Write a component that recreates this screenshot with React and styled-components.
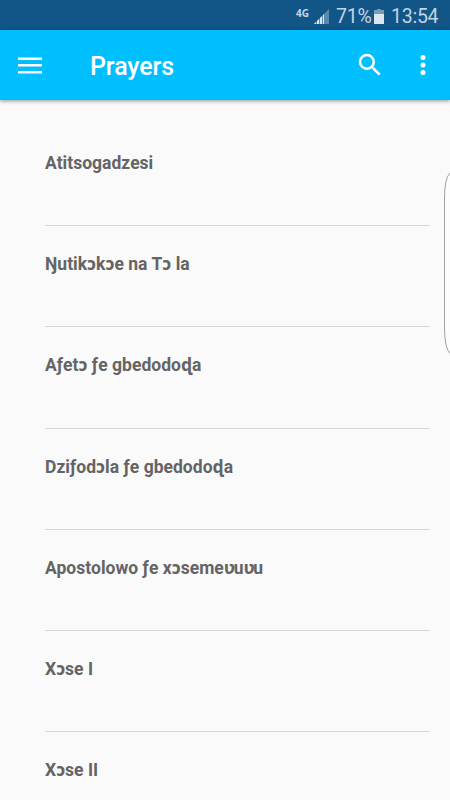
import React from "react";
import styled, { createGlobalStyle } from "styled-components";

const GlobalStyle = createGlobalStyle`
  *, *::before, *::after { box-sizing: border-box; }
  body { margin: 0; background: #fafafa; font-family: Roboto, "Noto Sans", sans-serif; overflow: hidden; }
`;

const Screen = styled.div`
  position: relative;
  display: flex;
  flex-direction: column;
  width: 450px;
  height: 800px;
  overflow: hidden;
  background: #fafafa;
`;

const StatusBar = styled.header`
  display: flex;
  flex: none;
  align-items: center;
  justify-content: flex-end;
  height: 30px;
  padding: 2px 12px 0 0;
  background: #125688;
  color: #c3d4e2;
  font-size: 19.5px;
  line-height: 28px;
`;

const Network = styled.span`
  margin: -7px 5px 0 0;
  font-size: 10px;
  font-weight: 700;
  letter-spacing: 0;
  font-family: "Open Sans", sans-serif;
`;

const SignalIcon = styled.svg`
  flex: none;
  margin-right: 7px;
`;

const BatteryIcon = styled.svg`
  flex: none;
  margin: 0 7px 0 4px;
`;

const StatusText = styled.span`
  width: ${(p) => p.$width}px;
  padding-top: 2px;
  white-space: nowrap;
  letter-spacing: -0.25px;
`;

const AppBar = styled.nav`
  display: flex;
  flex: none;
  align-items: center;
  height: 70px;
  padding: 0 10px 0 13px;
  background: #00bfff;
  color: #fff;
  box-shadow: 0 1px 4px rgba(0, 0, 0, 0.42);
`;

const Title = styled.h1`
  flex: 1;
  margin: 3px 0 0 43px;
  font-size: 25px;
  font-weight: 500;
  letter-spacing: -0.1px;
  line-height: 32px;
`;

const IconButton = styled.button`
  display: flex;
  align-items: center;
  justify-content: center;
  width: ${(p) => p.$width}px;
  height: 48px;
  padding: 0;
  border: 0;
  background: none;
  color: inherit;
`;

const SearchButton = styled(IconButton)`
  margin-right: 5px;
`;

const PrayerList = styled.ul`
  flex: none;
  margin: 0;
  padding: 24.75px 20px 0 45px;
  list-style: none;
`;

const PrayerRow = styled.li`
  height: 101.25px;
  padding-top: 27px;
  border-bottom: 1px solid #d6d6d6;
  color: #646464;
  font-size: 17.5px;
  font-weight: 700;
  letter-spacing: 0.02px;
  line-height: 22px;
`;

const NarrowHook = styled.span`
  letter-spacing: -1.7px;
`;

const EdgeHandle = styled.svg`
  position: absolute;
  top: 168px;
  right: 0;
`;

const prayers = [
  "Atitsogadzesi",
  "Ŋutikɔkɔe na Tɔ la",
  "Aƒetɔ ƒe gbedodoɖa",
  "Dziƒodɔla ƒe gbedodoɖa",
  "Apostolowo ƒe xɔsemeʋuʋu",
  "Xɔse I",
  "Xɔse II",
];

function PrayerName({ name }) {
  return name
    .split(/(ʋ)/)
    .map((part, i) => (part === "ʋ" ? <NarrowHook key={i}>{part}</NarrowHook> : part));
}

export default function App() {
  return (
    <Screen>
      <GlobalStyle />
      <StatusBar>
        <Network>4G</Network>
        <SignalIcon width="15" height="15" viewBox="0 0 15 15">
          <path d="M0 15L15 0V15Z" fill="#5a8aae" />
          <path d="M0 15L2 13V15ZM3 12L5 10V15H3ZM6 9L8 7V15H6ZM9 6L10 5V15H9Z" fill="#dce6ee" />
        </SignalIcon>
        <StatusText $width={34}>71%</StatusText>
        <BatteryIcon width="10" height="15" viewBox="0 0 10 15">
          <path d="M3 0H7V1H10V5H0V1H3Z" fill="#769cba" />
          <path d="M0 5H10V15H0Z" fill="#dce6ee" />
        </BatteryIcon>
        <StatusText $width={47}>13:54</StatusText>
      </StatusBar>
      <AppBar>
        <IconButton $width={34} aria-label="Menu">
          <svg width="24" height="17" viewBox="0 0 24 17" fill="currentColor">
            <path d="M0 .5H24V3H0ZM0 7H24V9.5H0ZM0 14H24V16.5H0Z" />
          </svg>
        </IconButton>
        <Title>Prayers</Title>
        <SearchButton $width={60} aria-label="Search">
          <svg width="30" height="30" viewBox="0 0 24 24" fill="currentColor">
            <path d="M15.5 14h-.79l-.28-.27A6.47 6.47 0 0 0 16 9.500 6.500 6.500 0 1 0 9.500 16c1.610 0 3.090-.59 4.230-1.570l.27.28v.79l5 4.990L20.490 19zM9.500 14A4.500 4.500 0 1 1 9.500 5a4.500 4.500 0 0 1 0 9z" />
          </svg>
        </SearchButton>
        <IconButton $width={35} aria-label="More options">
          <svg width="30" height="30" viewBox="0 0 24 24" fill="currentColor">
            <circle cx="12" cy="6" r="2" />
            <circle cx="12" cy="12" r="2" />
            <circle cx="12" cy="18" r="2" />
          </svg>
        </IconButton>
      </AppBar>
      <PrayerList>
        {prayers.map((name) => (
          <PrayerRow key={name}>
            <PrayerName name={name} />
          </PrayerRow>
        ))}
      </PrayerList>
      <EdgeHandle width="8" height="192" viewBox="0 0 8 192" fill="none">
        <path d="M8 5Q2.500 10 2.500 31V159Q2.500 180 8 185.500" fill="#fdfdfd" stroke="#a0a0a0" />
      </EdgeHandle>
    </Screen>
  );
}
